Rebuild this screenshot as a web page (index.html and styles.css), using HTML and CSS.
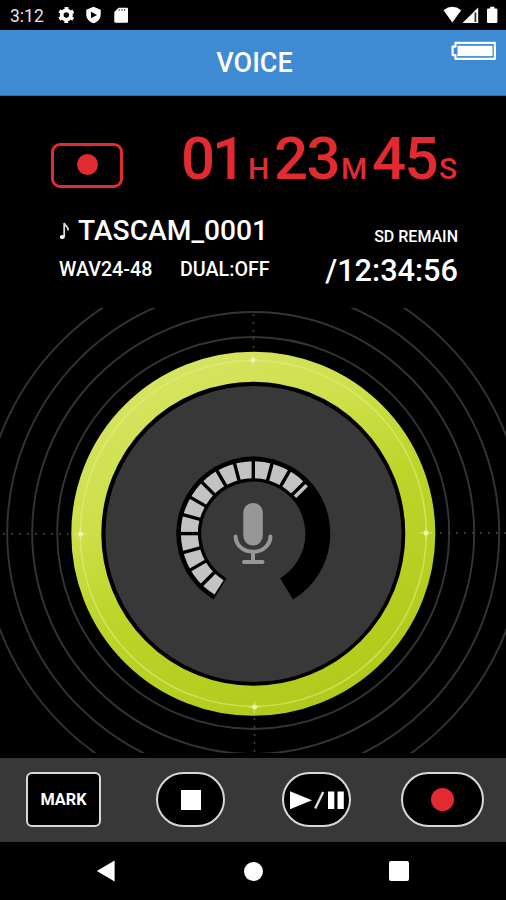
FILE: index.html
```
<!DOCTYPE html>
<html lang="en">
<head>
  <meta charset="UTF-8">
  <title>Voice Recorder</title>
  <link rel="stylesheet" href="styles.css">
</head>
<body>
  <div class="status-bar">
    <span class="clock">3:12</span>
    <svg class="status-left" width="72" height="18" viewBox="0 0 72 18">
      <!-- settings -->
      <circle cx="8.3" cy="9" r="4.6" fill="none" stroke="#fff" stroke-width="3.8"/>
      <circle cx="8.3" cy="9" r="6.7" fill="none" stroke="#fff" stroke-width="2.8" stroke-dasharray="3.6 3.416" stroke-dashoffset="1.8" transform="rotate(30 8.3 9)"/>
      <!-- shield -->
      <path d="M35.5 .8l7.2 2.9v5c0 4-3 7.2-7.2 8.6-4.2-1.4-7.2-4.6-7.2-8.6v-5z" fill="#fff"/>
      <path d="M33 5.8v6.4l6-3.2z" fill="#000"/>
      <!-- sd card -->
      <path d="M60.5 1.7h8.3q1.2 0 1.2 1.2v12.6q0 1.2-1.2 1.2H57.5q-1.2 0-1.2-1.2V5.9z" fill="#fff"/>
      <path d="M61.2 3v2M63.9 3v2M66.6 3v2" stroke="#777" stroke-width="1.3"/>
    </svg>
    <svg class="status-right" width="56" height="18" viewBox="0 0 56 18">
      <path d="M1.5 4.2Q10.3-2.6 19.2 4.2L10.3 16.5z" fill="#fff"/>
      <path d="M20.5 17L36.2 1.6V17z" fill="#fff"/>
      <path d="M33.4 6.5v9.5" stroke="#333" stroke-width="1.8"/>
      <path d="M48.2.8h4.2v1.7h2q1 0 1 1v12.6q0 1-1 1h-8.4q-1 0-1-1V3.5q0-1 1-1h2.2z" fill="#fff"/>
    </svg>
  </div>

  <div class="header">
    <h1>VOICE</h1>
    <svg class="battery" width="46" height="20" viewBox="0 0 46 20">
      <path d="M4.5 1.9h39.4v15.9H4.5v-3.7H1.6V5.6h2.9z" fill="none" stroke="#fff" stroke-width="2.2" stroke-linejoin="round"/>
      <rect x="6.5" y="4.8" width="35" height="10.3" fill="#fff"/>
    </svg>
  </div>

  <div class="info">
    <div class="time-row">
      <div class="rec-badge"><span class="dot"></span></div>
      <div class="time">
        <span class="num hours">01</span><span class="unit">H</span>
        <span class="num">23</span><span class="unit">M</span>
        <span class="num">45</span><span class="unit">S</span>
      </div>
    </div>
    <div class="file-row">
      <div class="file">
        <div class="file-name">
          <svg width="12" height="20" viewBox="0 0 12 20">
            <ellipse cx="3.3" cy="17" rx="2.5" ry="2" fill="#fff"/>
            <path d="M5.2 17V3c.8 3.5 4.8 3.5 3.8 7.5" fill="none" stroke="#ddd" stroke-width="1.8"/>
          </svg>
          <span>TASCAM_0001</span>
        </div>
        <div class="format"><span class="wav">WAV24-48</span><span class="dual">DUAL:OFF</span></div>
      </div>
      <div class="remain">
        <div class="remain-label">SD REMAIN</div>
        <div class="remain-time">/12:34:56</div>
      </div>
    </div>
  </div>

  <svg class="dial" width="506" height="445" viewBox="0 308 506 445">
    <defs>
      <linearGradient id="lime" x1="0.2" y1="0" x2="0.7" y2="1">
        <stop offset="0" stop-color="#d7e464"/>
        <stop offset="0.3" stop-color="#cde04a"/>
        <stop offset="0.55" stop-color="#bdd52a"/>
        <stop offset="1" stop-color="#b2ca1b"/>
      </linearGradient>
      <path id="gap" d="M53 0H77"/>
    </defs>
    <g class="waves">
      <circle cx="253.2" cy="533" r="196"/>
      <circle cx="253.2" cy="533" r="221"/>
      <circle cx="253.2" cy="533" r="246"/>
      <circle cx="253.2" cy="533" r="271"/>
    </g>
    <g class="axis">
      <path d="M253.5 314V352M254.5 718V753M3 534H72M506 533H436"/>
    </g>
    <circle cx="253.3" cy="533.7" r="167" fill="#000" stroke="url(#lime)" stroke-width="30"/>
    <circle class="shine" cx="253.3" cy="533.5" r="173"/>
    <g class="spark">
      <circle cx="253" cy="360" r="2.5"/>
      <circle cx="426" cy="533" r="2.5"/>
      <circle cx="254.5" cy="707" r="2.5"/>
      <circle cx="80.5" cy="534" r="2.5"/>
      <path d="M253 354v12M247 360h12M426 527v12M420 533h12M254.5 701v12M248.5 707h12M80.5 528v12M74.5 534h12"/>
    </g>
    <circle cx="253.5" cy="534" r="148" fill="#383838"/>

    <!-- level meter, one segment every 15 degrees -->
    <g transform="translate(253.3 533.6)">
      <circle class="meter" r="64.5" pathLength="360" stroke-dasharray="298 62" transform="rotate(121)"/>
      <circle class="level" r="63.8" pathLength="360" stroke-dasharray="192.5 167.5" transform="rotate(122.5)"/>
      <g class="gaps">
        <use href="#gap" transform="rotate(135)"/>
        <use href="#gap" transform="rotate(150)"/>
        <use href="#gap" transform="rotate(165)"/>
        <use href="#gap" transform="rotate(180)"/>
        <use href="#gap" transform="rotate(195)"/>
        <use href="#gap" transform="rotate(210)"/>
        <use href="#gap" transform="rotate(225)"/>
        <use href="#gap" transform="rotate(240)"/>
        <use href="#gap" transform="rotate(255)"/>
        <use href="#gap" transform="rotate(270)"/>
        <use href="#gap" transform="rotate(285)"/>
        <use href="#gap" transform="rotate(300)"/>
        <use href="#gap" transform="rotate(315)"/>
      </g>
      <rect x="55.5" y="1.7" width="16.5" height="3.6" fill="#c3c3c3" transform="rotate(315)"/>
    </g>

    <g class="mic">
      <rect x="243.3" y="503" width="19.5" height="42.5" rx="9.7"/>
      <path d="M235.6 536.5c0 8 7 15.3 17.4 15.3s17.4-7.3 17.4-15.3M253 552v9M244 562h18.5"/>
    </g>
  </svg>

  <div class="controls">
    <button class="btn mark">MARK</button>
    <button class="btn stop"><span class="square"></span></button>
    <button class="btn play">
      <svg width="56" height="20" viewBox="0 0 56 20">
        <path d="M1 1.2v18L23 10.2z" fill="#fff"/>
        <path d="M26.2 18.5L34.2 2" stroke="#ddd" stroke-width="2.4"/>
        <path d="M39 1.5h6.3v17.5h-6.3zM48.5 1.5h6.3v17.5h-6.3z" fill="#fff"/>
      </svg>
    </button>
    <button class="btn record"><span class="dot"></span></button>
  </div>

  <div class="nav">
    <svg width="20" height="22" viewBox="0 0 20 22"><path d="M.8 11L18.6 .6v20.8z" fill="#fff"/></svg>
    <span class="home"></span>
    <span class="recent"></span>
  </div>
</body>
</html>
```
FILE: styles.css
```
* { box-sizing: border-box; }
body {
  margin: 0;
  width: 506px;
  height: 900px;
  overflow: hidden;
  background-color: #000;
  color: #fff;
  font-family: Roboto, "Liberation Sans", sans-serif;
  font-weight: 500;
}
svg { display: block; }

.status-bar {
  display: flex;
  height: 30px;
  padding: 6px 8px 0 10px;
}
.clock {
  width: 48px;
  color: #e4e4e4;
  font-size: 17.5px;
  font-weight: 400;
  line-height: 20px;
}
.status-right { margin-left: auto; }

.header {
  position: relative;
  height: 66px;
  background-color: #3e8bd3;
  border-bottom: 1px solid #2f6ba5;
}
h1 {
  margin: 0;
  padding-left: 3px;
  text-align: center;
  font-size: 27px;
  font-weight: 500;
  line-height: 66px;
}
.battery {
  position: absolute;
  top: 11px;
  right: 9px;
}

.info {
  height: 212px;
  padding: 33px 48px 0 51px;
}
.time-row {
  display: flex;
  justify-content: space-between;
  height: 86px;
  color: #e22a31;
}
.rec-badge {
  display: flex;
  align-items: center;
  justify-content: center;
  width: 72px;
  height: 45px;
  margin-top: 14px;
  border: 3px solid #e22a31;
  border-radius: 9px;
}
.dot {
  width: 21px;
  height: 21px;
  border-radius: 50%;
  background-color: #e22a31;
}
.rec-badge .dot { margin-bottom: 2px; }
.time {
  display: flex;
  align-items: baseline;
  height: 60px;
  margin-right: 1px;
  line-height: 60px;
}
.num {
  width: 67px;
  font-size: 60px;
  letter-spacing: -1.5px;
}
.hours { letter-spacing: -3px; }
.unit {
  width: 26px;
  font-size: 30px;
  font-weight: 500;
}
.unit:nth-child(4) { width: 31px; }
.unit:last-child { width: 18px; }

.file-row {
  display: flex;
  justify-content: space-between;
  padding-left: 8px;
}
.file-name {
  display: flex;
  gap: 7px;
  align-items: center;
  height: 30px;
  font-size: 28.2px;
}
.format {
  display: flex;
  margin-top: 14px;
  font-size: 19.7px;
  line-height: 22px;
}
.wav { width: 121px; }
.remain { text-align: right; }
.remain-label {
  margin-top: 12px;
  font-size: 16px;
  line-height: 20px;
}
.remain-time {
  margin-top: 9px;
  font-size: 30.7px;
  line-height: 30px;
}

.waves circle {
  fill: none;
  stroke: #343434;
  stroke-width: 1.9;
}
.axis path {
  stroke: #444;
  stroke-width: 1.5;
  stroke-dasharray: 2 6;
}
.shine {
  fill: none;
  stroke: #e4ee86;
  stroke-width: 1.6;
  opacity: .55;
}
.spark circle { fill: #f3f8bd; opacity: .85; }
.spark path { stroke: #eef5a8; stroke-width: 1.5; opacity: .4; }
.meter { fill: none; stroke: #000; stroke-width: 25; }
.level { fill: none; stroke: #c3c3c3; stroke-width: 17; }
.gaps { stroke: #000; stroke-width: 3.4; }
.mic rect { fill: #979797; }
.mic path {
  fill: none;
  stroke: #979797;
  stroke-width: 4;
  stroke-linecap: round;
}

.controls {
  display: flex;
  height: 84px;
  margin-top: 5px;
  padding: 14px 0 0 26px;
  background-color: #383838;
}
.btn {
  display: flex;
  align-items: center;
  justify-content: center;
  height: 55px;
  padding: 0;
  border: 2px solid #d8d8d8;
  background-color: #000;
  color: #fff;
  font-family: inherit;
}
.mark {
  width: 75px;
  border-radius: 6px;
  font-size: 16.3px;
  font-weight: 700;
}
.stop {
  width: 69px;
  margin-left: 55px;
  border-radius: 28px;
}
.play {
  width: 69px;
  margin-left: 57px;
  border-radius: 28px;
}
.record {
  width: 83px;
  margin-left: 50px;
  border-radius: 28px;
}
.record .dot {
  width: 23px;
  height: 23px;
  margin-right: 1px;
}
.square {
  width: 20px;
  height: 20px;
  margin-top: 1px;
  background-color: #fff;
}

.nav {
  display: flex;
  align-items: center;
  height: 58px;
  padding-left: 96px;
}
.home {
  width: 19px;
  height: 19px;
  margin-left: 128px;
  border-radius: 50%;
  background-color: #fff;
}
.recent {
  width: 20px;
  height: 20px;
  margin-left: 126px;
  border-radius: 2px;
  background-color: #fff;
}
```
